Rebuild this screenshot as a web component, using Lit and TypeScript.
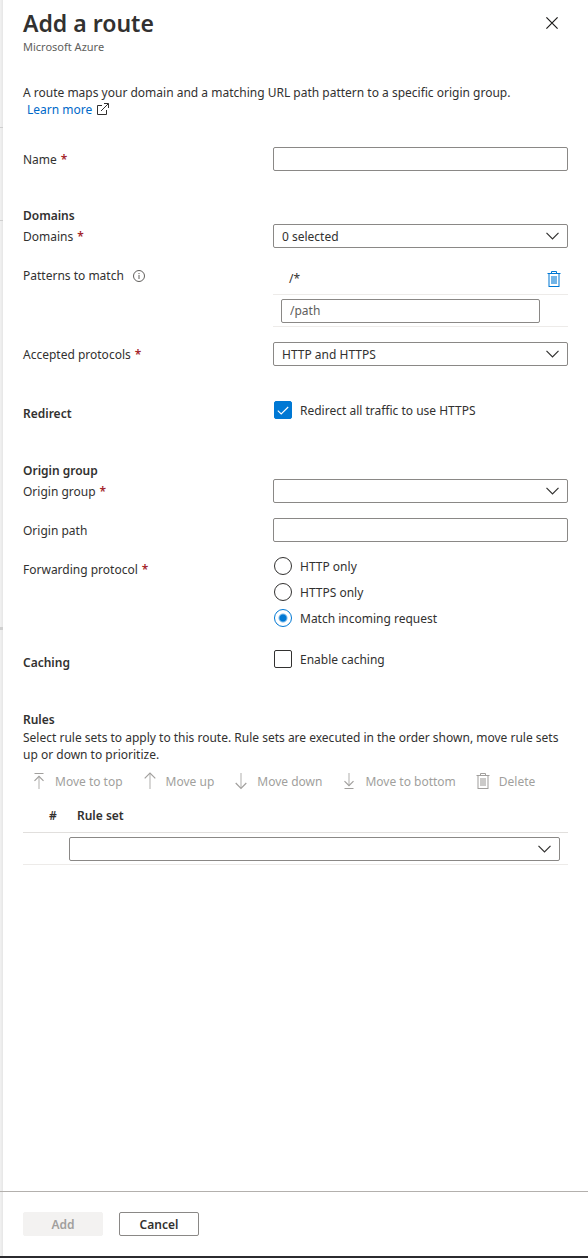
import { LitElement, html, css, svg } from "lit";
import { customElement } from "lit/decorators.js";

const chevron = html`<svg class="chevron" width="13" height="8" viewBox="0 0 13 8" aria-hidden="true">
  <path d="M0.5 0.8 L6.5 6.8 L12.5 0.8" fill="none" stroke="currentColor" stroke-width="1.2" />
</svg>`;

const trash = html`<svg class="icon" width="16" height="18" viewBox="0 0 16 18" aria-hidden="true">
  <path d="M5.5 3 V1.5 H10.5 V3" fill="none" stroke="currentColor" />
  <path d="M1.5 3.5 H14.5" stroke="currentColor" />
  <path d="M3 4 V16 M13 4 V16" stroke="currentColor" stroke-width="2" opacity="0.5" />
  <path d="M2.5 16.5 H13.5" stroke="currentColor" />
  <rect x="5" y="6" width="6" height="8" fill="currentColor" opacity="0.55" />
</svg>`;

const arrow = (strokes: string, bar: string) => html`<svg class="icon" width="16" height="18" viewBox="0 0 16 18" aria-hidden="true">
  <path d=${strokes} fill="none" stroke="currentColor" stroke-width="1.2" />
  ${svg`<path d=${bar} fill="none" stroke="currentColor" stroke-width="1.2" opacity="0.7" />`}
</svg>`;

const commands = [
  { label: "Move to top", icon: arrow("M3.5 1.5 H12.5 M3.5 8.8 L8 4.3 L12.5 8.8", "M8 4.5 V17") },
  { label: "Move up", icon: arrow("M2.7 6.3 L8 1 L13.3 6.3", "M8 1.5 V17") },
  { label: "Move down", icon: arrow("M2.7 11 L8 16.3 L13.3 11", "M8 1 V16") },
  { label: "Move to bottom", icon: arrow("M3.5 16.5 H12.5 M3.5 9.2 L8 13.7 L12.5 9.2", "M8 1 V13.5") },
  { label: "Delete", icon: trash },
];

@customElement("app-root")
export class AppRoot extends LitElement {
  static styles = css`
    :host {
      display: flex;
      flex-direction: column;
      min-height: 100vh;
      box-sizing: border-box;
      border-bottom: 2px solid #2b2b2f;
      background: #fff;
      color: #323130;
      font-family: "Segoe UI", "Noto Sans", sans-serif;
      font-size: 12px;
      line-height: 17px;
    }
    * { box-sizing: border-box; }
    button, input, select { font: inherit; color: inherit; margin: 0; }
    h1, h2, p { margin: 0; }
    .body { flex: 1; display: grid; grid-template-columns: 3px 1fr; }
    .edge, .foot-edge { background: linear-gradient(to right, #f2f2f2, #e6e6e6); }
    .edge { display: flex; flex-direction: column; }
    .tick { border-bottom: 1px solid #cfcfcf; }
    .tick-a { height: 128px; }
    .tick-b { height: 93px; }
    .tick-c { height: 409px; border-bottom-width: 3px; }
    .panel { padding: 8px 20px 24px; }
    .head { display: flex; justify-content: space-between; align-items: flex-start; height: 76px; }
    h1 { font-size: 23px; line-height: 30px; font-weight: 600; }
    .sub { font-size: 11px; line-height: 18px; color: #605e5c; }
    .close {
      display: grid; place-items: center; width: 32px; height: 30px;
      padding: 0; border: 0; background: none;
    }
    .intro { margin-bottom: 29px; }
    a { color: #0069c9; text-decoration: none; margin-left: 4px; }
    .ext { color: #323130; margin-left: 2px; vertical-align: -1px; }
    .section { display: flex; flex-direction: column; margin-bottom: 35px; }
    .rows { display: flex; flex-direction: column; gap: 15px; }
    h2 { font-size: 12px; line-height: 16px; padding-top: 2px; font-weight: 600; }
    .row { display: grid; grid-template-columns: 250px 1fr; align-items: start; }
    .name { line-height: 22px; padding-top: 2px; display: flex; align-items: center; }
    .strong { line-height: 22px; }
    .req { color: #a4262c; margin-left: 4px; font-weight: 600; }
    .info { margin-left: 9px; color: #605e5c; }
    .text, .select {
      width: 100%; height: 24px; border: 1px solid #8a8886; border-radius: 2px;
      background: #fff; padding: 0 8px; outline: none;
    }
    .text::placeholder { color: #605e5c; opacity: 1; }
    .select { appearance: none; grid-area: 1 / 1; }
    .pick { display: grid; align-items: center; }
    .chevron { grid-area: 1 / 1; justify-self: end; margin-right: 9px; pointer-events: none; }
    .line {
      display: flex; align-items: center; justify-content: space-between;
      height: 32px; border-bottom: 1px solid #edebe9; padding: 0 6px 0 16px;
    }
    .line-edit { padding: 0 28px 0 8px; }
    .trash { display: flex; padding: 0; border: 0; background: none; color: #0078d4; }
    .option { display: flex; align-items: center; gap: 8px; height: 18px; padding-left: 1px; }
    .radios { border: 0; margin: 0; padding: 0; min-width: 0; }
    .radios .option { margin-bottom: 8px; }
    .box {
      appearance: none; width: 18px; height: 18px; flex: none;
      border: 1px solid #323130; border-radius: 2px; background: #fff;
    }
    .tick-wrap { display: grid; place-items: center; }
    .tick-wrap > * { grid-area: 1 / 1; }
    .mark { color: #fff; pointer-events: none; }
    .box:checked { background: #0078d4; border-color: #0078d4; }
    .radio { border-radius: 50%; }
    .radio:checked { background: radial-gradient(circle, #0078d4 3px, #fff 5px); }
    .short { min-height: 25px; }
    .lead { padding-top: 1px; }
    .commands { display: flex; align-items: center; gap: 19px; height: 36px; padding-left: 8px; }
    .command {
      display: flex; align-items: center; gap: 8px; padding: 0; border: 0;
      background: none; color: #a19f9d; white-space: nowrap;
    }
    .icon { flex: none; }
    table { width: 100%; border-collapse: separate; border-spacing: 0; table-layout: fixed; }
    th { height: 34px; padding: 0; font-weight: 600; text-align: left; border-bottom: 1px solid #e1dfdd; }
    td { height: 32px; padding: 0 8px 0 0; border-bottom: 1px solid #edebe9; }
    .num { width: 46px; padding-left: 26px; }
    .set { padding-left: 8px; }
    .foot { display: grid; grid-template-columns: 3px 1fr; border-top: 1px solid #b3b0ad; }
    .actions { display: flex; gap: 16px; padding: 20px; }
    .btn {
      width: 80px; height: 24px; padding: 0; border-radius: 2px; font-weight: 600;
      border: 1px solid #8a8886; background: #fff;
    }
    .btn:disabled { background: #f3f2f1; border-color: #f3f2f1; color: #a19f9d; }
  `;

  private required() {
    return html`<span class="req">*</span>`;
  }

  private pick(id: string, value: string, label?: string) {
    return html`<div class="pick">
      <select class="select" id=${id} aria-label=${label ?? value}><option>${value}</option></select>
      ${chevron}
    </div>`;
  }

  private radio(id: string, label: string, checked = false) {
    return html`<div class="option">
      <input class="box radio" type="radio" name="forwarding" id=${id} ?checked=${checked} />
      <label for=${id}>${label}</label>
    </div>`;
  }

  render() {
    return html`
      <div class="body">
        <div class="edge">
          <div class="tick tick-a"></div>
          <div class="tick tick-b"></div>
          <div class="tick tick-c"></div>
        </div>
        <main class="panel">
          <header class="head">
            <div>
              <h1>Add a route</h1>
              <p class="sub">Microsoft Azure</p>
            </div>
            <button class="close" aria-label="Close">
              <svg width="12" height="12" viewBox="0 0 12 12"><path d="M0.4 0.4 L11.6 11.6 M11.6 0.4 L0.4 11.6" stroke="#1b1a19" stroke-width="1.2" /></svg>
            </button>
          </header>

          <p class="intro">
            A route maps your domain and a matching URL path pattern to a specific origin group.<br />
            <a href="#">Learn more
              <svg class="ext" width="12" height="12" viewBox="0 0 12 12" aria-hidden="true"><path d="M5 2.5 H0.5 V11.5 H9.5 V7 M4 8 L11.3 0.7 M7 0.5 H11.5 V5" fill="none" stroke="currentColor" /></svg></a>
          </p>

          <section class="section">
            <div class="row">
              <label class="name" for="name">Name ${this.required()}</label>
              <input class="text" id="name" type="text" />
            </div>
          </section>

          <section class="section">
            <h2>Domains</h2>
            <div class="rows">
              <div class="row">
                <label class="name" for="domains">Domains ${this.required()}</label>
                ${this.pick("domains", "0 selected", "Domains")}
              </div>
              <div class="row">
                <label class="name" for="pattern">Patterns to match
                  <svg class="info" width="12" height="12" viewBox="0 0 12 12" aria-hidden="true"><circle cx="6" cy="6" r="5.5" fill="none" stroke="currentColor" /><path d="M6 5 V9 M6 3 V4.1" stroke="currentColor" /></svg>
                </label>
                <div>
                  <div class="line">
                    <span>/*</span>
                    <button class="trash" aria-label="Delete pattern">${trash}</button>
                  </div>
                  <div class="line line-edit">
                    <input class="text" id="pattern" type="text" placeholder="/path" />
                  </div>
                </div>
              </div>
              <div class="row">
                <label class="name" for="protocols">Accepted protocols ${this.required()}</label>
                ${this.pick("protocols", "HTTP and HTTPS", "Accepted protocols")}
              </div>
            </div>
          </section>

          <section class="section">
            <div class="row short">
              <h2 class="strong">Redirect</h2>
              <div class="option">
                <span class="tick-wrap">
                  <input class="box" type="checkbox" id="redirect" checked />
                  <svg class="mark" width="12" height="9" viewBox="0 0 12 9" aria-hidden="true"><path d="M0.8 4.6 L4.2 8 L11.2 1" fill="none" stroke="currentColor" stroke-width="1.1" /></svg>
                </span>
                <label for="redirect">Redirect all traffic to use HTTPS</label>
              </div>
            </div>
          </section>

          <section class="section">
            <h2>Origin group</h2>
            <div class="rows">
              <div class="row">
                <label class="name" for="origin">Origin group ${this.required()}</label>
                ${this.pick("origin", "", "Origin group")}
              </div>
              <div class="row">
                <label class="name" for="path">Origin path</label>
                <input class="text" id="path" type="text" />
              </div>
              <div class="row">
                <span class="name" id="forwarding">Forwarding protocol ${this.required()}</span>
                <fieldset class="radios" aria-labelledby="forwarding">
                  ${this.radio("http", "HTTP only")}
                  ${this.radio("https", "HTTPS only")}
                  ${this.radio("match", "Match incoming request", true)}
                </fieldset>
              </div>
              <div class="row short">
                <h2 class="strong">Caching</h2>
                <div class="option">
                  <input class="box" type="checkbox" id="caching" />
                  <label for="caching">Enable caching</label>
                </div>
              </div>
            </div>
          </section>

          <section>
            <h2>Rules</h2>
            <p class="lead">Select rule sets to apply to this route. Rule sets are executed in the order shown, move rule sets up or down to prioritize.</p>
            <div class="commands">
              ${commands.map((c) => html`<button class="command" disabled>${c.icon}<span>${c.label}</span></button>`)}
            </div>
            <table>
              <thead>
                <tr><th class="num">#</th><th class="set">Rule set</th></tr>
              </thead>
              <tbody>
                <tr><td></td><td>${this.pick("ruleset", "", "Rule set")}</td></tr>
              </tbody>
            </table>
          </section>
        </main>
      </div>
      <footer class="foot">
        <div class="foot-edge"></div>
        <div class="actions">
          <button class="btn" disabled>Add</button>
          <button class="btn">Cancel</button>
        </div>
      </footer>
    `;
  }
}
